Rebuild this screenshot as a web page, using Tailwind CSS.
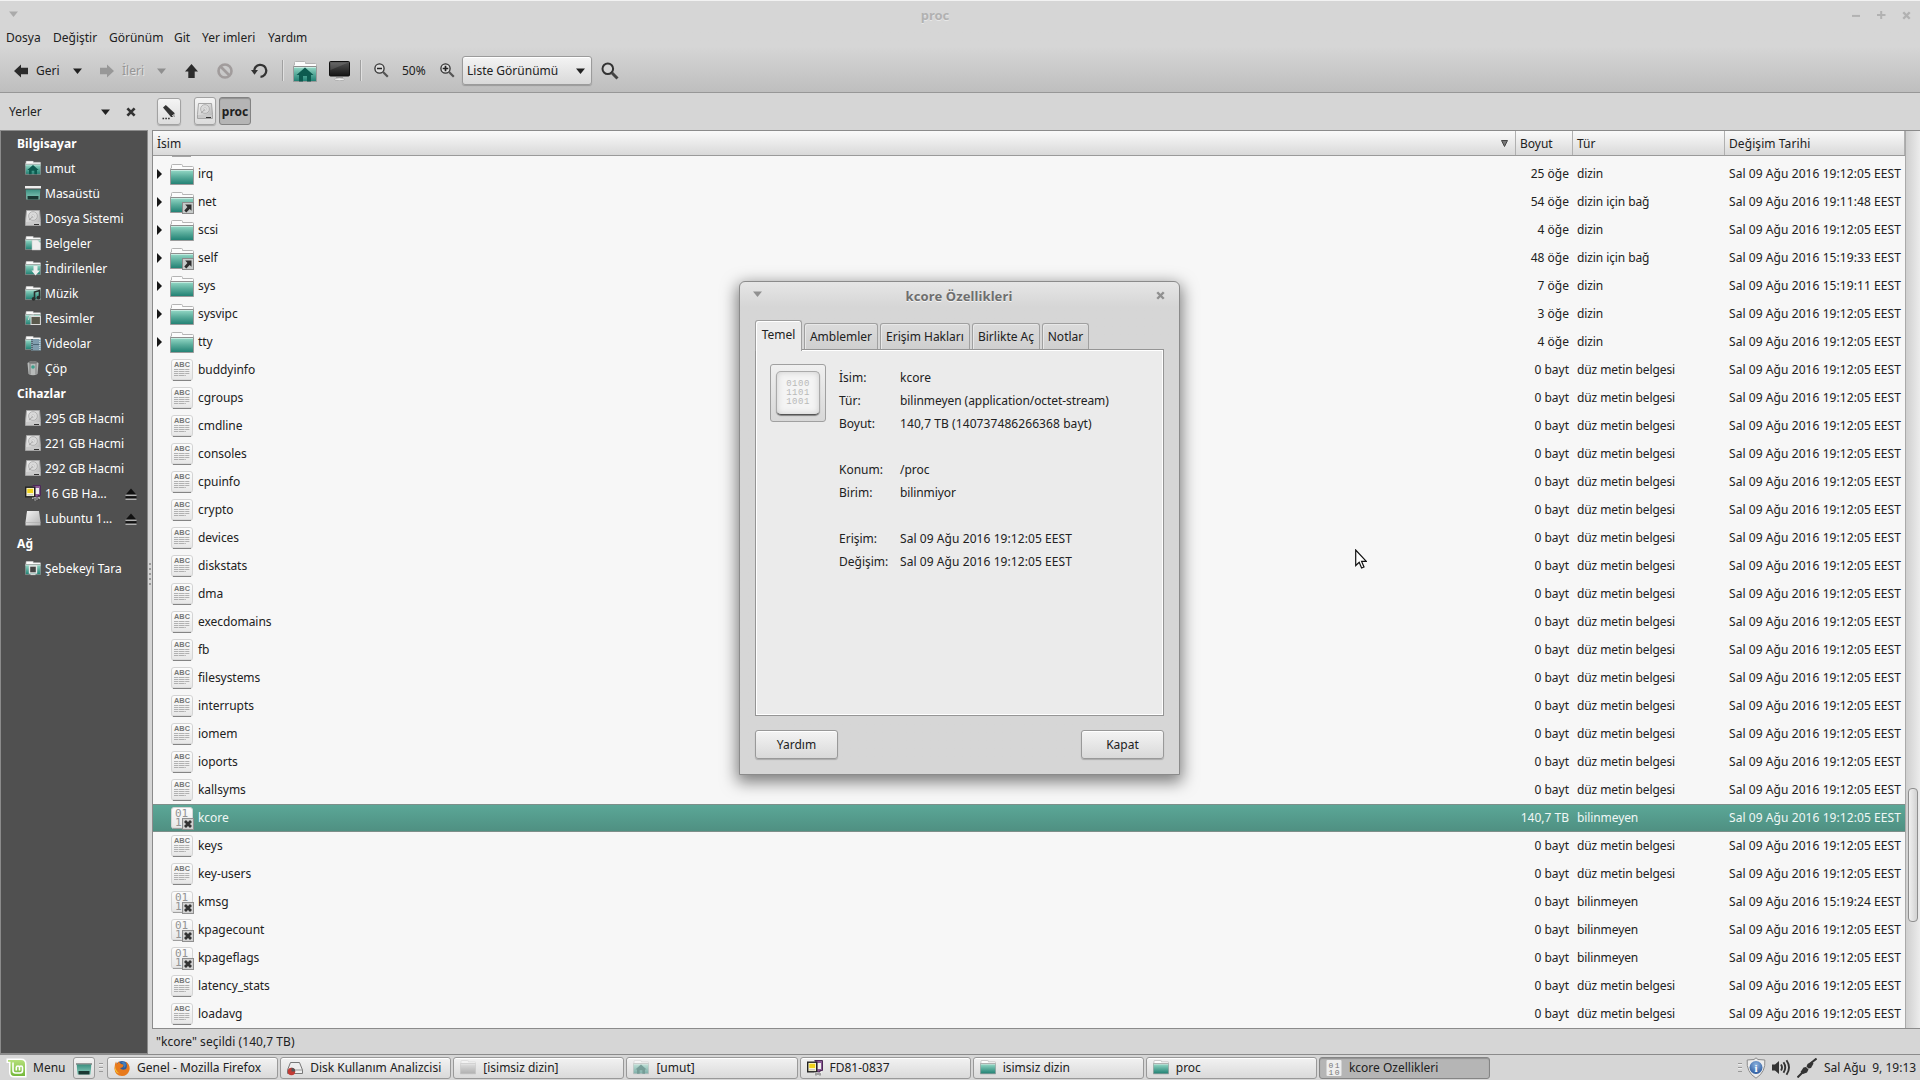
<!DOCTYPE html>
<html lang="tr">
<head>
<meta charset="utf-8">
<title>proc</title>
<script src="https://cdn.jsdelivr.net/npm/@tailwindcss/browser@4"></script>
</head>
<body class="relative h-[1080px] w-[1920px] overflow-hidden bg-[#d6d6d6] font-['Noto_Sans',sans-serif] text-[12px] leading-none text-[#212121] whitespace-nowrap">

<svg class="absolute size-0">
  <defs>
    <linearGradient id="teal" x1="0" y1="0" x2="0" y2="1"><stop offset="0" stop-color="#9adcca"/><stop offset=".45" stop-color="#5fb09f"/><stop offset="1" stop-color="#1f7f72"/></linearGradient>
    <linearGradient id="screen" x1="0" y1="0" x2="0" y2="1"><stop offset="0" stop-color="#3b8f80"/><stop offset="1" stop-color="#8fd0c0"/></linearGradient>
    <linearGradient id="paper" x1="0" y1="0" x2="0" y2="1"><stop offset="0" stop-color="#fdfdfd"/><stop offset="1" stop-color="#e6e6e6"/></linearGradient>
    <linearGradient id="dark" x1="0" y1="0" x2="0" y2="1"><stop offset="0" stop-color="#555"/><stop offset="1" stop-color="#141414"/></linearGradient>
    <linearGradient id="metal" x1="0" y1="0" x2="1" y2="1"><stop offset="0" stop-color="#f4f4f4"/><stop offset="1" stop-color="#b2b2b2"/></linearGradient>
    <radialGradient id="blue" cx=".5" cy=".3" r=".7"><stop offset="0" stop-color="#8db4e0"/><stop offset="1" stop-color="#2c5a9e"/></radialGradient>
    <linearGradient id="mint" x1="0" y1="0" x2="0" y2="1"><stop offset="0" stop-color="#b5e07a"/><stop offset="1" stop-color="#74b83a"/></linearGradient>

    <symbol id="folder" viewBox="0 0 24 22">
      <path d="M1.500 4V1.500Q1.500 .500 2.500 .500H11.500Q12.500 .500 12.500 1.500V2.500H22.500Q23.500 2.500 23.500 3.500V7H.500V5Q.500 4 1.500 4Z" fill="#fcfcfc" stroke="#b4b4b4"/>
      <path d="M.500 5.500H23.500V20.500H.500Z" fill="url(#teal)" stroke="#9a9a9a"/>
      <path d="M1 5.500H23" stroke="#8f8f8f"/><path d="M1 6.500H23" stroke="#c4ece1"/>
    </symbol>
    <symbol id="linkfolder" viewBox="0 0 24 22">
      <use href="#folder" width="24" height="22"/>
      <rect x="12.500" y="10.500" width="11" height="11" fill="#c6cac9" stroke="#8a8a8a"/>
      <path d="M15.200 12.500H21.500V18.800L19.700 17L16.300 20.400L14.300 18.400L17.400 15Z" fill="#2e2e2e"/>
    </symbol>
    <symbol id="house" viewBox="0 0 24 22">
      <use href="#folder" width="24" height="22"/>
      <path d="M12 6.500L20.500 14H18V20.500H14V15H10V20.500H6V14H3.500Z" fill="#0d5a4f"/>
    </symbol>
    <symbol id="abc" viewBox="0 0 22 22">
      <rect x=".5" y=".5" width="21" height="21" rx="2.5" fill="url(#paper)" stroke="#d4d4d4"/>
      <path d="M2 21.4H20" stroke="#7a7a7a"/>
      <text x="11" y="8" text-anchor="middle" font-family="Liberation Sans" font-weight="bold" font-size="7.3" textLength="16" fill="#777">ABC</text>
      <path d="M3 10.5H19M3 12.5H19M3 14.5H19M3 16.5H15" stroke="#a9a9a9" stroke-width=".9" stroke-dasharray="4 .6 6 .6"/>
    </symbol>
    <symbol id="bin" viewBox="0 0 23 23">
      <rect x=".5" y=".5" width="21" height="21" rx="2.5" fill="url(#paper)" stroke="#d4d4d4"/>
      <path d="M2 21.4H20" stroke="#999"/>
      <text x="4" y="9.700" font-family="DejaVu Sans Mono" font-size="11" fill="#949494">01</text>
      <text x="4" y="19" font-family="DejaVu Sans Mono" font-size="11" fill="#949494">1</text>
      <rect x="11.5" y="11.5" width="11" height="11" fill="#d0d0d0" stroke="#8f8f8f"/>
      <path d="M14 14L20 20M20 14L14 20" stroke="#333" stroke-width="2.8"/>
    </symbol>
    <symbol id="disk" viewBox="0 0 16 16">
      <path d="M1.5.5H14.5L15.5 11.5V15.5H.5V11.5Z" fill="url(#metal)" stroke="#a5a5a5"/>
      <circle cx="8" cy="6" r="4.4" fill="#dadada" stroke="#a9a9a9" stroke-width=".8"/><circle cx="8" cy="6" r="1.3" fill="#f4f4f4" stroke="#aaa" stroke-width=".5"/>
      <path d="M4 10L8 6.4" stroke="#999" stroke-width=".8"/>
      <rect x="1" y="12" width="14" height="3" fill="#c9c9c9"/><path d="M9 14.5H14" stroke="#333"/>
    </symbol>
    <symbol id="desk" viewBox="0 0 16 16">
      <rect x="0" y="1" width="16" height="3" fill="#eee"/><rect x="0" y="3.5" width="16" height="1" fill="#444"/>
      <path d="M.7 4.5H15.3L14.6 14.5H1.4Z" fill="url(#screen)"/><rect x="2.500" y="11" width="11" height="3.500" fill="#1b3833"/>
    </symbol>
    <symbol id="docs" viewBox="0 0 16 16"><use href="#folder" y="1" width="16" height="14.6"/><path d="M7 5H12.5L15.5 8V15H7Z" fill="#efefef" stroke="#bdbdbd" stroke-width=".5"/></symbol>
    <symbol id="down" viewBox="0 0 16 16"><use href="#folder" y="1" width="16" height="14.6"/><path d="M8.5 6H12.5V10.5H15L10.5 15.5L6.5 10.5H8.5Z" fill="#eee"/></symbol>
    <symbol id="music" viewBox="0 0 16 16"><use href="#folder" y="1" width="16" height="14.6"/><path d="M9.5 14V7L14.5 5.5V12" fill="none" stroke="#2a2f2e" stroke-width="1.6"/><circle cx="8.6" cy="13.8" r="1.9" fill="#2a2f2e"/><circle cx="13.5" cy="12.6" r="1.9" fill="#2a2f2e"/></symbol>
    <symbol id="pics" viewBox="0 0 16 16"><use href="#folder" y="1" width="16" height="14.6"/><rect x="6" y="6.5" width="9.4" height="8" fill="#5a594c" stroke="#ddd"/><path d="M3.5 10Q4 4.5 9 5" fill="none" stroke="#ddd"/></symbol>
    <symbol id="video" viewBox="0 0 16 16"><use href="#folder" y="1" width="16" height="14.6"/><rect x="6" y="4" width="10" height="11.5" fill="#7f9dae"/><path d="M7 4V15.5" stroke="#333" stroke-dasharray="1 1"/><path d="M14.8 4V15.5" stroke="#dfe7ea" stroke-dasharray="1 1"/><path d="M8 9.5H14" stroke="#4c6675"/></symbol>
    <symbol id="trash" viewBox="0 0 16 16"><path d="M2.5 3Q8 -1 13.5 3L12.5 14Q8 16.5 3.5 14Z" fill="#b7bab9"/><path d="M5 2V14.6M11 2V14.6" stroke="#888" stroke-width="1.2"/><ellipse cx="8" cy="2.4" rx="4" ry="1.4" fill="#777"/><circle cx="8" cy="7" r="1.8" fill="#3fa08d"/></symbol>
    <symbol id="usb" viewBox="0 0 16 16"><path d="M7.5.5H15.5V10.5H13V12H9.5V8" fill="#8b5a96" stroke="#4c2a57"/><rect x="10.5" y="3" width="3.5" height="6" fill="#eee"/><rect x=".7" y="2.2" width="9" height="9.6" fill="#fbf6d0" stroke="#222" stroke-width="1.4"/><rect x="2.3" y="3.8" width="5.8" height="4.2" fill="#f0d21c"/><rect x="2.3" y="9" width="5.8" height="1.5" fill="#ccc"/><path d="M8 12.5V14M10 12V15.5M12 12.5V15M14 12V14" stroke="#eee" stroke-width="1.2"/><path d="M9 13V15.5M11 13V15M13 13V15.5" stroke="#333" stroke-width=".8"/></symbol>
    <symbol id="drive" viewBox="0 0 16 16"><path d="M2 1H14L15.5 12V15.5H.5V12Z" fill="url(#metal)"/><path d="M.5 12.5H15.5" stroke="#aaa" stroke-width=".6"/></symbol>
    <symbol id="net" viewBox="0 0 16 16"><use href="#folder" y="1" width="16" height="14.6"/><rect x="4.5" y="6" width="7" height="7" fill="#444" stroke="#e7e7e7" stroke-width="1.4"/><path d="M5.5 14.6H10.5" stroke="#ddd"/></symbol>
    <symbol id="eject" viewBox="0 0 12 12"><path d="M6 .5L11.5 6.7H.5Z" fill="#111"/><rect x=".5" y="8.2" width="11" height="2.4" fill="#111"/><path d="M.5 7.2H11.5M.5 11.2H11.5" stroke="#ddd" stroke-width="1"/></symbol>
    <symbol id="caret" viewBox="0 0 9 6"><path d="M0 .5H9L4.5 6Z" fill="currentColor"/></symbol>
    <symbol id="x" viewBox="0 0 10 10"><path d="M1.4 1.4L8.6 8.6M8.6 1.4L1.4 8.6" stroke="currentColor" stroke-width="2.7"/></symbol>
    <symbol id="arrow" viewBox="0 0 14 14"><path d="M0 7L7 .5V3.7H14V10.3H7V13.5Z" fill="currentColor"/></symbol>
    <symbol id="grip" viewBox="0 0 4 9"><path d="M0 .5H4M0 4.5H4M0 8.5H4" stroke="#999"/><path d="M0 1.5H4M0 5.5H4" stroke="#eee"/></symbol>
  </defs>
</svg>

<div class="flex h-[1080px] flex-col">
  <!-- Title bar, menu bar and toolbar -->
  <header class="flex h-[93px] flex-none flex-col border-t border-b border-t-[#f2f2f2] border-b-[#979797] bg-linear-to-b from-[#d6d6d6] from-50% to-[#bebebe]">
    <div class="flex h-7 items-center justify-between pr-[9px] pl-[9px] text-[#aaa]">
      <svg class="mb-[3px] h-1.5 w-[9px] flex-none"><use href="#caret"/></svg>
      <div class="text-[13px] font-bold text-[#b1b1b1] [text-shadow:0_1px_#e8e8e8]">proc</div>
      <div class="flex items-center gap-4 text-[#b2b2b2]">
        <svg class="h-2.5 w-[9px]"><path d="M0 5.9H8" stroke="currentColor" stroke-width="2"/></svg>
        <svg class="h-2.5 w-[9px]"><path d="M0 5H8.500M4.200 1V9" stroke="currentColor" stroke-width="2"/></svg>
        <svg class="size-[9px]"><use href="#x"/></svg>
      </div>
    </div>
    <nav class="flex h-[18px] items-center pl-1.5">
      <span class="w-[47px]">Dosya</span><span class="w-14">Değiştir</span><span class="w-[65px]">Görünüm</span><span class="w-7">Git</span><span class="w-[66px]">Yer imleri</span><span>Yardım</span>
    </nav>
    <div class="flex h-[45px] items-center pt-0.5 pl-[14px]">
      <svg class="mr-2 h-3.5 w-3.5 text-[#2b2b2b]"><use href="#arrow"/></svg>
      <span class="w-[37px]">Geri</span>
      <svg class="mr-[18px] h-1.5 w-[9px]"><use href="#caret"/></svg>
      <svg class="mr-2 h-3.5 w-3.5 -scale-x-100 text-[#989898]"><use href="#arrow"/></svg>
      <span class="w-[35px] text-[#969696] [text-shadow:1px_1px_#e4e4e4]">İleri</span>
      <svg class="mr-[19px] h-1.5 w-[9px] text-[#8f8f8f]"><use href="#caret"/></svg>
      <svg class="mr-[19px] h-3.5 w-[13px]" viewBox="0 0 13 14"><path d="M6.500 0L13 7.500H9.700V14H3.300V7.500H0Z" fill="#2b2b2b"/></svg>
      <svg class="mr-[18px] size-4" viewBox="0 0 16 16"><circle cx="8" cy="8" r="6.500" fill="none" stroke="#a19c9c" stroke-width="2.600"/><path d="M3.500 3.500L12.500 12.500" stroke="#a19c9c" stroke-width="2.600"/></svg>
      <svg class="mr-[14px] h-4 w-[17px]" viewBox="0 0 17 16"><path d="M3.300 8.500A6 6 0 1 1 9.500 13.800" fill="none" stroke="#333" stroke-width="2.300"/><path d="M0 7H7L3.500 11.800Z" fill="#333"/></svg>
      <div class="mr-[9px] h-[21px] w-0.5 border-r border-l border-r-[#e0e0e0] border-l-[#a0a0a0]"></div>
      <svg class="mt-0.5 mr-3 h-[22px] w-6"><use href="#house"/></svg>
      <svg class="mr-2.5 h-5 w-[21px]" viewBox="0 0 21 20"><rect x=".5" y=".5" width="20" height="14.500" rx="1" fill="url(#dark)" stroke="#111"/><path d="M1.500 1.500H19.500L1.500 9Z" fill="#fff" opacity=".12"/><path d="M7 16H14V18H7Z" fill="#999"/><ellipse cx="10.500" cy="18.300" rx="5" ry="1.400" fill="#eee" stroke="#999" stroke-width=".6"/></svg>
      <div class="mr-3 h-[21px] w-0.5 border-r border-l border-r-[#e0e0e0] border-l-[#a0a0a0]"></div>
      <svg class="mr-[13px] size-[15px]" viewBox="0 0 15 15"><circle cx="5.500" cy="5.500" r="4.600" fill="#ddd" stroke="#333" stroke-width="1.300"/><path d="M3 5.500H8" stroke="#222" stroke-width="1.500"/><path d="M9 9L13.800 13.800" stroke="#555" stroke-width="2.200"/></svg>
      <span class="w-[38px]">50%</span>
      <svg class="mr-[7px] size-[15px]" viewBox="0 0 15 15"><circle cx="5.500" cy="5.500" r="4.600" fill="#ddd" stroke="#333" stroke-width="1.300"/><path d="M2.700 5.500H8.300M5.500 2.700V8.300" stroke="#222" stroke-width="1.700"/><path d="M9 9L13.800 13.800" stroke="#555" stroke-width="2.200"/></svg>
      <div class="mr-[9px] flex h-[29px] w-[130px] items-center justify-between rounded-[3px] border border-[#9b9b9b] bg-linear-to-b from-[#f4f4f4] to-[#d9d9d9] pr-1.5 pl-1 shadow-[inset_0_1px_#fff,0_1px_1px_#0003]"><span>Liste Görünümü</span><svg class="h-1.5 w-[9px]"><use href="#caret"/></svg></div>
      <svg class="size-[18px]" viewBox="0 0 18 18"><circle cx="6.800" cy="6.800" r="5.300" fill="#d4d4d4" stroke="#333" stroke-width="2"/><path d="M10.800 10.800L16.500 16.500" stroke="#444" stroke-width="3"/></svg>
    </div>
  </header>

  <main class="flex h-[961px] flex-none">
    <!-- Places -->
    <aside class="flex w-[148px] flex-none flex-col">
      <div class="flex h-[37px] flex-none items-center pl-[9px]">
        <span class="w-[92px]">Yerler</span>
        <svg class="mr-4 h-1.5 w-[9px]"><use href="#caret"/></svg>
        <svg class="size-2.5 text-[#333]"><use href="#x"/></svg>
      </div>
      <div id="places" class="flex-1 border border-[#8b8b8b] bg-[#505050] text-white"></div>
    </aside>
    <div class="flex w-1 flex-none items-center justify-center">
      <div class="flex flex-none flex-col gap-[3px]"><i class="size-0.5 bg-[#999]"></i><i class="size-0.5 bg-[#999]"></i><i class="size-0.5 bg-[#999]"></i><i class="size-0.5 bg-[#999]"></i><i class="size-0.5 bg-[#999]"></i></div>
    </div>
    <section class="flex flex-1 flex-col">
      <div class="flex h-[37px] flex-none items-start pt-1 pl-[5px]">
        <div class="mt-px mr-[13px] flex h-[27px] w-6 items-center justify-center rounded-[3px] border border-[#a2a2a2] bg-linear-to-b from-[#f4f4f4] to-[#dcdcdc] shadow-[0_1px_1px_#0003]">
          <svg class="h-4 w-[14px]" viewBox="0 0 14 16"><path d="M1 3.500L3.800 1L12.500 9V13H9Z" fill="#333"/><path d="M10 11.500L12 12.500V10" stroke="#eee" fill="none"/><path d="M.500 14.500H8" stroke="#333" stroke-width="1.600" stroke-dasharray="1.600 1.200"/></svg>
        </div>
        <div class="mr-[3px] flex h-7 w-[22px] items-center justify-center rounded-[3px] border border-[#a2a2a2] bg-linear-to-b from-[#f4f4f4] to-[#dcdcdc] shadow-[0_1px_1px_#0003]"><svg class="size-4 flex-none"><use href="#disk"/></svg></div>
        <div class="flex h-7 w-8 items-center justify-center rounded-[3px] border border-[#838383] bg-[#b5b5b5] pt-px font-bold shadow-[inset_0_1px_1px_#0003]">proc</div>
      </div>
      <div class="flex flex-1 border border-[#8b8b8b]">
        <div class="flex flex-1 flex-col bg-[#f7f7f7]">
          <div class="grid h-[25px] flex-none grid-cols-[1363px_57px_152px_180px] border-b border-[#9a9a9a] bg-linear-to-b from-[#fafafa] to-[#d9d9d9] *:flex *:items-center *:border-r *:border-[#b0b0b0] *:pt-px *:pl-1">
            <div class="justify-between pr-[7px]">İsim<svg class="h-[7px] w-[7px]" viewBox="0 0 7 7"><path d="M.500 .500H6.500L3.500 6.500Z" fill="#777" stroke="#444"/></svg></div>
            <div>Boyut</div><div>Tür</div><div class="tracking-[0.08px]">Değişim Tarihi</div>
          </div>
          <div class="h-1 flex-none pl-[19px]"><div class="h-px w-[19px] bg-[#a5a5a5]"></div></div>
          <div id="files"></div>
        </div>
        <div class="w-[15px] flex-none border-l border-[#a9a9a9] bg-linear-to-r from-[#cfcfcf] to-[#ececec] pt-[657px] pl-[2px]">
          <div class="h-[134px] w-[10px] rounded-[4px] border border-[#8f8f8f] bg-linear-to-r from-[#f0f0f0] to-[#d2d2d2]"></div>
        </div>
      </div>
      <div class="flex h-[25px] flex-none items-center pl-1 tracking-[0.05px]">"kcore" seçildi (140,7 TB)</div>
    </section>
  </main>

  <!-- Panel -->
  <footer class="flex h-[26px] flex-none items-center border-t border-[#8b8b8b] pl-1.5">
    <svg class="mr-1.5 h-5 w-[21px]" viewBox="0 0 21 20"><path d="M.500 .500H15Q20.500 .500 20.500 6V19.500H8Q3 19.500 3 14V5H.500Z" fill="#fff"/><path d="M2 2H15Q19 2 19 6V18H8Q4.500 18 4.500 14V3.800H2Z" fill="url(#mint)"/><path d="M7 4.500V12.500Q7 15 9.500 15H14Q16.500 15 16.500 12.500V9.500Q16.500 8 15 8Q13.500 8 13.500 9.500V12.500M13.500 9.500Q13.500 8 12 8Q10.300 8 10.300 9.500V12.500" fill="none" stroke="#fff" stroke-width="1.600"/></svg>
    <span class="w-10">Menu</span>
    <div class="mr-1 flex h-[22px] w-[22px] items-center justify-center rounded-[3px] border border-[#999] bg-linear-to-b from-[#f4f4f4] to-[#dadada]"><svg class="size-4 flex-none"><use href="#desk"/></svg></div>
    <svg class="mr-1 h-[9px] w-1"><use href="#grip"/></svg>
    <div id="tasks" class="flex w-[1383px] gap-[2px]"></div>
    <svg class="mr-1 ml-[248px] h-[9px] w-1"><use href="#grip"/></svg>
    <svg class="mr-1.5 h-[22px] w-5" viewBox="0 0 20 22"><path d="M10 .800L12 2.500L18.800 3Q20 15 10 21.200Q0 15 1.200 3L8 2.500Z" fill="#ececec" stroke="#8b8b8b"/><circle cx="10" cy="10.500" r="6.500" fill="url(#blue)"/><text x="10" y="14.500" text-anchor="middle" font-family="Liberation Serif" font-weight="bold" font-size="11" fill="#fff">i</text></svg>
    <svg class="mr-1.5 h-[17px] w-[19px]" viewBox="0 0 19 17"><path d="M0 5.500H3L7 2V15L3 11.500H0Z" fill="#333"/><path d="M9 5.500Q11 8.500 9 11.500M11.500 3.300Q15 8.500 11.500 13.700M14.500 1.300Q19.500 8.500 14.500 15.700" fill="none" stroke="#333" stroke-width="1.900"/></svg>
    <svg class="mr-[7px] h-5 w-5" viewBox="0 0 20 20"><path d="M19.500 .500L14 5M6 14L.500 19.500" stroke="#333" stroke-width="2"/><path d="M10.500 6L14.500 3.500L16.500 5.500L14 10L11.500 10.500L9.500 8.500Z" fill="#333"/><path d="M6.500 9.500L9 9L11.500 11.500L10 14.500L6 16L3.500 14Z" fill="#333"/></svg>
    <span class="whitespace-pre">Sal Ağu  9, 19:13</span>
  </footer>
</div>

<!-- Properties dialog -->
<div class="absolute top-[281px] left-[739px] flex h-[494px] w-[441px] flex-col rounded-t-[6px] border border-[#8b8b8b] bg-[#d6d6d6] bg-linear-to-b from-[#e6e6e6] to-[#d6d6d6] to-5% px-[15px] shadow-[0_5px_16px_2px_rgba(0,0,0,0.5)]">
  <div class="flex h-[27px] flex-none items-center justify-between text-[#909090]">
    <svg class="mb-1 -ml-0.5 h-1.5 w-[9px]"><use href="#caret"/></svg>
    <div class="pt-px text-[13px] font-bold tracking-[0.1px] text-[#6e6e6e] [text-shadow:0_1px_#f4f4f4]">kcore Özellikleri</div>
    <svg class="-mr-px size-[9px]"><use href="#x"/></svg>
  </div>
  <div class="mt-2.5 flex h-[30px] flex-none items-end gap-[2px]">
    <div class="relative z-10 -mb-0.5 flex h-[31px] w-[47px] justify-center rounded-t-[3px] border border-b-0 border-[#a0a0a0] bg-[#ebebeb] pt-2 shadow-[inset_1px_1px_#fff]">Temel</div>
    <div class="flex h-[26px] w-[74px] items-center justify-center rounded-t-[3px] border border-b-0 border-[#a0a0a0] bg-linear-to-b from-[#dcdcdc] to-[#cfcfcf] pt-px shadow-[inset_1px_1px_#e8e8e8]">Amblemler</div>
    <div class="flex h-[26px] w-[90px] items-center justify-center rounded-t-[3px] border border-b-0 border-[#a0a0a0] bg-linear-to-b from-[#dcdcdc] to-[#cfcfcf] pt-px shadow-[inset_1px_1px_#e8e8e8]">Erişim Hakları</div>
    <div class="flex h-[26px] w-[68px] items-center justify-center rounded-t-[3px] border border-b-0 border-[#a0a0a0] bg-linear-to-b from-[#dcdcdc] to-[#cfcfcf] pt-px shadow-[inset_1px_1px_#e8e8e8]">Birlikte Aç</div>
    <div class="flex h-[26px] w-[47px] items-center justify-center rounded-t-[3px] border border-b-0 border-[#a0a0a0] bg-linear-to-b from-[#dcdcdc] to-[#cfcfcf] pt-px shadow-[inset_1px_1px_#e8e8e8]">Notlar</div>
  </div>
  <div class="flex h-[367px] flex-none border border-[#959595] bg-[#ebebeb] pt-[14px] pl-[14px] shadow-[inset_0_0_0_1px_#fff]">
    <div class="mr-[13px] flex h-[58px] w-14 flex-none items-center justify-center rounded-[3px] border border-[#a0a0a0] bg-linear-to-b from-[#f0f0f0] to-[#d8d8d8]">
      <div class="flex size-11 flex-col items-center justify-center rounded-[5px] border border-[#aaa] border-b-[#555] bg-[#f4f4f4] font-['Liberation_Mono',monospace] text-[9px] leading-[9px] tracking-[0.5px] text-[#b9b9b9] shadow-[inset_0_0_6px_#ccc,0_1px_1px_#0006]"><span>0100</span><span>1101</span><span>1001</span></div>
    </div>
    <div class="flex h-fit flex-col pt-[2px] *:grid *:h-[23px] *:grid-cols-[61px_auto] *:items-center">
      <div><span>İsim:</span><span>kcore</span></div>
      <div><span>Tür:</span><span class="tracking-[-0.06px]">bilinmeyen (application/octet-stream)</span></div>
      <div><span>Boyut:</span><span class="tracking-[0.08px]">140,7 TB (140737486266368 bayt)</span></div>
      <div class="mt-[23px]"><span>Konum:</span><span>/proc</span></div>
      <div><span>Birim:</span><span class="tracking-[-0.1px]">bilinmiyor</span></div>
      <div class="mt-[23px]"><span>Erişim:</span><span class="tracking-[0.07px]">Sal 09 Ağu 2016 19:12:05 EEST</span></div>
      <div><span>Değişim:</span><span class="tracking-[0.07px]">Sal 09 Ağu 2016 19:12:05 EEST</span></div>
    </div>
  </div>
  <div class="mt-[14px] flex justify-between">
    <div class="flex h-[29px] w-[83px] items-center justify-center rounded-[3px] border border-[#999] bg-linear-to-b from-[#f4f4f4] to-[#d9d9d9] shadow-[inset_0_1px_#fff,0_1px_1px_#0003]">Yardım</div>
    <div class="flex h-[29px] w-[83px] items-center justify-center rounded-[3px] border border-[#999] bg-linear-to-b from-[#f4f4f4] to-[#d9d9d9] shadow-[inset_0_1px_#fff,0_1px_1px_#0003]">Kapat</div>
  </div>
</div>

<!-- Mouse pointer -->
<svg class="absolute top-[549px] left-[1355px] h-5 w-3" viewBox="0 0 12 20"><path d="M.700 1V16.500L4.200 13.200L6.600 19L9 18L6.600 12.400H11.300Z" fill="#fff" stroke="#111" stroke-width="1.200"/></svg>

<script>
const icon = (id, cls) => `<svg class="${cls}"><use href="#${id}"/></svg>`;

document.getElementById('places').innerHTML = [
  ['Bilgisayar'], ['umut', 'house'], ['Masaüstü', 'desk'], ['Dosya Sistemi', 'disk'], ['Belgeler', 'docs'],
  ['İndirilenler', 'down'], ['Müzik', 'music'], ['Resimler', 'pics'], ['Videolar', 'video'], ['Çöp', 'trash'],
  ['Cihazlar'], ['295 GB Hacmi', 'disk'], ['221 GB Hacmi', 'disk'], ['292 GB Hacmi', 'disk'],
  ['16 GB Ha...', 'usb', 1], ['Lubuntu 1...', 'drive', 1], ['Ağ'], ['Şebekeyi Tara', 'net']
].map(([name, ic, eject]) => ic
  ? `<div class="flex h-[25px] items-center pl-6">${icon(ic, 'mr-1 mb-px size-4 flex-none')}<span class="flex-1">${name}</span>${eject ? icon('eject', 'mr-2.5 size-3') : ''}</div>`
  : `<div class="flex h-[25px] items-center pl-4 font-bold tracking-[0.08px]">${name}</div>`).join('');

const D = 'Sal 09 Ağu 2016 19:12:05 EEST';
const rows = [
  ['irq', 'folder', '25 öğe', 'dizin', D],
  ['net', 'linkfolder', '54 öğe', 'dizin için bağ', 'Sal 09 Ağu 2016 19:11:48 EEST'],
  ['scsi', 'folder', '4 öğe', 'dizin', D],
  ['self', 'linkfolder', '48 öğe', 'dizin için bağ', 'Sal 09 Ağu 2016 15:19:33 EEST'],
  ['sys', 'folder', '7 öğe', 'dizin', 'Sal 09 Ağu 2016 15:19:11 EEST'],
  ['sysvipc', 'folder', '3 öğe', 'dizin', D],
  ['tty', 'folder', '4 öğe', 'dizin', D],
  ...'buddyinfo cgroups cmdline consoles cpuinfo crypto devices diskstats dma execdomains fb filesystems interrupts iomem ioports kallsyms'.split(' ').map(n => [n, 'abc', '0 bayt', 'düz metin belgesi', D]),
  ['kcore', 'bin', '140,7 TB', 'bilinmeyen', D],
  ['keys', 'abc', '0 bayt', 'düz metin belgesi', D],
  ['key-users', 'abc', '0 bayt', 'düz metin belgesi', D],
  ['kmsg', 'bin', '0 bayt', 'bilinmeyen', 'Sal 09 Ağu 2016 15:19:24 EEST'],
  ['kpagecount', 'bin', '0 bayt', 'bilinmeyen', D],
  ['kpageflags', 'bin', '0 bayt', 'bilinmeyen', D],
  ['latency_stats', 'abc', '0 bayt', 'düz metin belgesi', D],
  ['loadavg', 'abc', '0 bayt', 'düz metin belgesi', D]
];
document.getElementById('files').innerHTML = rows.map(([n, ic, s, t, d]) => {
  const dir = ic.includes('folder');
  const state = n === 'kcore' ? 'border-y border-[#7d8f8a] bg-linear-to-b from-[#5ba797] to-[#4f9082] text-[#f0f7f5]' : '';
  const glyph = dir ? icon(ic, 'mt-0.5 mr-[4px] h-[22px] w-6') : ic === 'abc' ? icon(ic, 'mr-[5px] ml-px h-[22px] w-[22px]') : icon(ic, 'mt-px mr-1 ml-px size-[23px]');
  const arrow = dir ? '<svg class="mr-2 h-2.5 w-[5px]"><path d="M0 0L5 5L0 10Z" fill="#161616"/></svg>' : '<i class="mr-2 w-[5px]"></i>';
  return `<div class="grid h-7 grid-cols-[1363px_57px_152px_180px] items-center ${state}"><div class="flex items-center pl-1">${arrow}${glyph}<span class="mb-px tracking-[-0.05px]">${n}</span></div><div class="mb-px pr-1 text-right">${s}</div><div class="mb-px pl-1 tracking-[-0.1px]">${t}</div><div class="mb-px pl-1 tracking-[0.07px]">${d}</div></div>`;
}).join('');

const ff = '<svg class="mr-[7px] size-4 flex-none" viewBox="0 0 16 16"><circle cx="8" cy="8" r="7" fill="#2e5c9c"/><path d="M4.500 1.500Q7 5 10 4.500Q9 8 6 8Q8 11 12 9Q14 6 11.500 1.500Q16.500 4.500 15.500 10Q13.500 16 8 16Q1 15.500 .500 9Q.300 4.500 2 1.500L3 4Z" fill="#e87a1d"/><path d="M1.500 5Q1 11 5.500 13.500Q2 13 1 10Z" fill="#f6c62f"/><path d="M7 2Q10 1 12 4Q12 7 9.500 8Q11 5 7 2Z" fill="#3f7fc0"/></svg>';
const baobab = '<svg class="mr-[7px] size-4 flex-none" viewBox="0 0 16 16"><path d="M3.500 2.500H12.500L15.500 10V13.500H.500V10Z" fill="#eee" stroke="#777"/><path d="M.500 10H15.500" stroke="#999"/><circle cx="4.500" cy="11.500" r="3.700" fill="#c23a34"/><path d="M4.500 11.500V7.800A3.700 3.700 0 0 1 8.200 11.500Z" fill="#555"/></svg>';
const bits = '<svg class="mr-[7px] size-4 flex-none" viewBox="0 0 16 16"><rect width="15" height="16" x=".500" rx="1" fill="#eee"/><text x="2.500" y="7.500" font-family="Liberation Mono" font-size="8" textLength="11" fill="#777">01</text><text x="2.500" y="14.500" font-family="Liberation Mono" font-size="8" textLength="11" fill="#777">10</text></svg>';
const tasks = [
  ['Genel - Mozilla Firefox', ff], ['Disk Kullanım Analizcisi', baobab],
  ['[isimsiz dizin]', icon('folder', 'mr-[7px] h-[15px] w-4 flex-none opacity-40 grayscale')],
  ['[umut]', icon('house', 'mr-[7px] h-[15px] w-4 flex-none opacity-50')],
  ['FD81-0837', icon('usb', 'mr-[7px] size-4 flex-none')],
  ['isimsiz dizin', icon('folder', 'mr-[7px] h-[15px] w-4 flex-none')],
  ['proc', icon('folder', 'mr-[7px] h-[15px] w-4 flex-none')],
  ['kcore Ozellikleri', bits]
];
document.getElementById('tasks').innerHTML = tasks.map(([n, ic], i) =>
  `<div class="flex h-[22px] flex-1 items-center rounded-[3px] border pl-1.5 ${i === 7 ? 'border-[#858585] bg-[#b5b5b5] shadow-[inset_0_1px_1px_#0003]' : 'border-[#999] bg-linear-to-b from-[#f2f2f2] to-[#dadada] shadow-[inset_0_1px_#fff]'}">${ic}<span>${n}</span></div>`).join('');
</script>
</body>
</html>
